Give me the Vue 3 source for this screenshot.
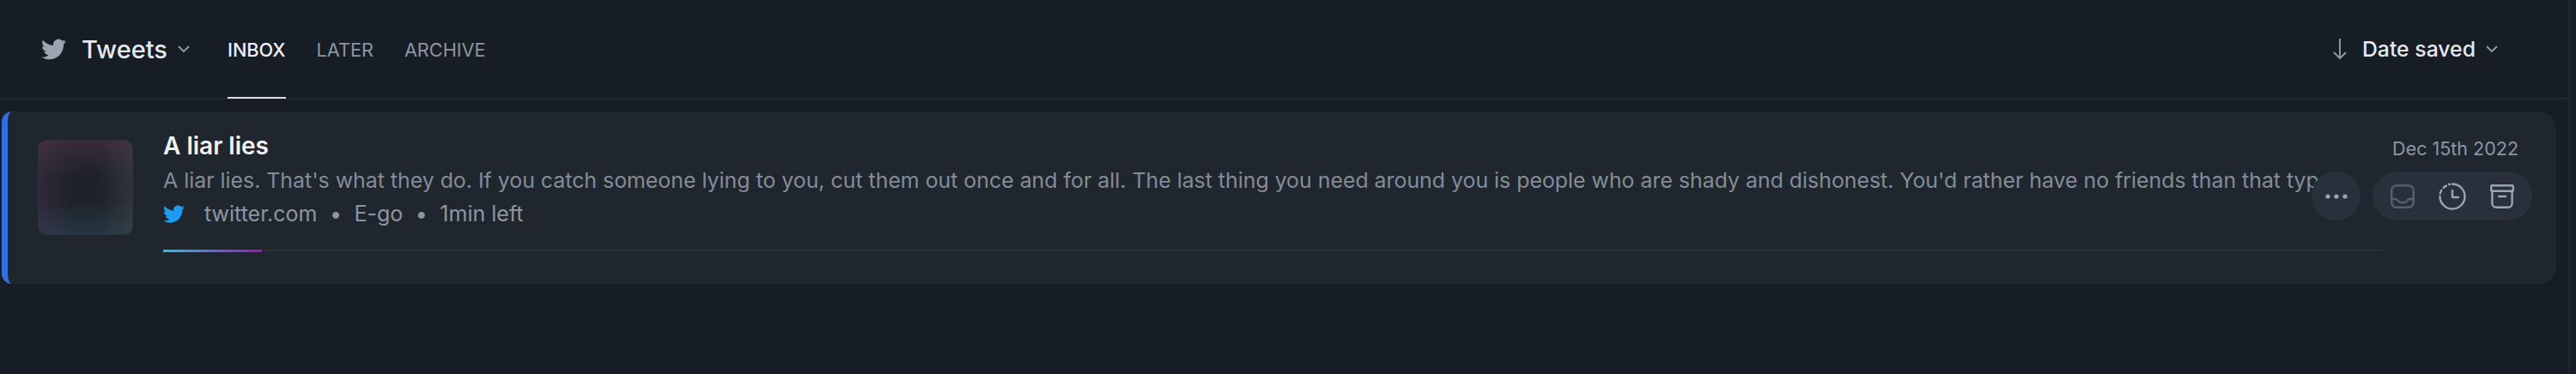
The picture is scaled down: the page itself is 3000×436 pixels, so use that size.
<script setup>
const tabs = [
  { label: 'INBOX', active: true },
  { label: 'LATER', active: false },
  { label: 'ARCHIVE', active: false },
]
const twitterPath = 'M23.953 4.57a10 10 0 01-2.825.775 4.958 4.958 0 002.163-2.723c-.951.555-2.005.959-3.127 1.184a4.92 4.92 0 00-8.384 4.482C7.69 8.095 4.067 6.13 1.64 3.162a4.822 4.822 0 00-.666 2.475c0 1.71.87 3.213 2.188 4.096a4.904 4.904 0 01-2.228-.616v.06a4.923 4.923 0 003.946 4.827 4.996 4.996 0 01-2.212.085 4.936 4.936 0 004.604 3.417 9.867 9.867 0 01-6.102 2.105c-.39 0-.779-.023-1.17-.067a13.995 13.995 0 007.557 2.209c9.053 0 13.998-7.496 13.998-13.985 0-.21 0-.42-.015-.63A9.935 9.935 0 0024 4.59z'
</script>

<template>
  <div class="page">
    <div class="main">
      <header class="topbar">
        <div class="left">
          <svg class="bird" viewBox="0 0 24 24"><path :d="twitterPath" /></svg>
          <span class="feed-name">Tweets</span>
          <svg class="chevron" viewBox="0 0 14 8"><path d="M1 1l6 6 6-6" /></svg>
          <nav class="tabs">
            <a v-for="tab in tabs" :key="tab.label" class="tab" :class="{ active: tab.active }">{{ tab.label }}</a>
          </nav>
        </div>
        <div class="sort">
          <svg class="arrow" viewBox="0 0 16 26"><path d="M8 1v23M1 17l7 7 7-7" /></svg>
          <span class="sort-label">Date saved</span>
          <svg class="chevron" viewBox="0 0 14 8"><path d="M1 1l6 6 6-6" /></svg>
        </div>
      </header>

      <article class="card">
        <div class="thumb"></div>
        <div class="body">
          <h2 class="title">A liar lies</h2>
          <p class="summary">A liar lies. That's what they do. If you catch someone lying to you, cut them out once and for all. The last thing you need around you is people who are shady and dishonest. You'd rather have no friends than that type of people around you.</p>
          <div class="meta">
            <svg class="meta-bird" viewBox="0 0 24 24"><path :d="twitterPath" /></svg>
            <span class="domain">twitter.com</span>
            <span class="dot">•</span>
            <span>E-go</span>
            <span class="dot">•</span>
            <span>1min left</span>
          </div>
          <div class="progress"><div class="progress-fill"></div></div>
        </div>
        <div class="date">Dec 15th 2022</div>
        <div class="actions">
          <button class="more">
            <svg viewBox="0 0 26 6"><circle cx="3" cy="3" r="2.6" /><circle cx="13" cy="3" r="2.6" /><circle cx="23" cy="3" r="2.6" /></svg>
          </button>
          <div class="pill">
            <svg class="icon dim" viewBox="0 0 28 28">
              <rect x="1.2" y="1.2" width="25.6" height="25.6" rx="6" />
              <path d="M1.2 17h5c1.5 0 2 1 2.6 2.2.6 1.2 1.4 1.8 2.7 1.8h5c1.3 0 2.1-.6 2.7-1.8.6-1.2 1.1-2.2 2.6-2.2h5" />
            </svg>
            <svg class="icon clock" viewBox="0 0 32 32">
              <path d="M16 1.5a14.5 14.5 0 1 1-14.5 14.5" />
              <path d="M1.8 12.5a14.5 14.5 0 0 1 1.6-3.7M5.8 5.8a14.5 14.5 0 0 1 3-2.2M12 2l1-.2" />
              <path d="M16 9v8h7" />
            </svg>
            <svg class="icon archive" viewBox="0 0 28 28">
              <rect x="1.2" y="1.2" width="25.6" height="6.5" rx="1" />
              <path d="M2.4 7.7V22a4.8 4.8 0 0 0 4.8 4.8h13.6a4.8 4.8 0 0 0 4.8-4.8V7.7M10 14h8" />
            </svg>
          </div>
        </div>
      </article>
    </div>
  </div>
</template>

<style>
html,
body {
  margin: 0;
  background: #161d25;
}
</style>

<style scoped>
.page {
  display: flex;
  width: 3000px;
  height: 436px;
  overflow: hidden;
  background: #161d25;
  font-family: Inter, "Liberation Sans", sans-serif;
  color: #8c96a3;
}

.main {
  width: 2993px;
  border-right: 2px solid #1f262e;
  box-sizing: border-box;
}

.topbar {
  display: flex;
  align-items: center;
  justify-content: space-between;
  height: 116px;
  box-sizing: border-box;
  padding: 0 82px 0 48px;
  border-bottom: 2px solid #222931;
}

.left,
.sort {
  display: flex;
  align-items: center;
}

.bird {
  width: 29px;
  height: 29px;
  fill: #9aa5b0;
}

.feed-name {
  margin-left: 18px;
  font-size: 29px;
  font-weight: 500;
  color: #e6e8ee;
}

.chevron {
  width: 14px;
  height: 8px;
  margin-left: 12px;
  fill: none;
  stroke: #8c96a3;
  stroke-width: 2;
}

.tabs {
  display: flex;
  gap: 36px;
  margin-left: 44px;
}

.tab {
  position: relative;
  padding-top: 2px;
  font-size: 21.7px;
  line-height: 114px;
  color: #8c96a3;
}

.tab.active {
  color: #f0f1f5;
  font-weight: 500;
}

.tab.active::after {
  content: "";
  position: absolute;
  left: 0;
  right: 0;
  bottom: 0;
  height: 2px;
  background: #d8dbe2;
}

.arrow {
  width: 16px;
  height: 26px;
  fill: none;
  stroke: #8c96a3;
  stroke-width: 2;
}

.sort-label {
  margin-left: 18px;
  font-size: 24.8px;
  font-weight: 500;
  color: #e6e8ee;
}

.card {
  position: relative;
  display: flex;
  width: 2975px;
  height: 201px;
  margin: 14px 0 0 2px;
  box-sizing: border-box;
  padding: 33px 0 0 35px;
  background: #1f262e;
  border-left: 7px solid #2f6fde;
  border-radius: 12px 20px 20px 12px;
}

.thumb {
  flex: none;
  width: 111px;
  height: 111px;
  box-sizing: border-box;
  border: 1px solid #2c333d;
  border-radius: 10px;
  background:
    linear-gradient(to bottom, rgba(92, 56, 76, 0.42), rgba(92, 56, 76, 0) 40%),
    linear-gradient(to right, rgba(78, 50, 90, 0.38), rgba(78, 50, 90, 0) 35%),
    linear-gradient(to left, rgba(70, 76, 84, 0.42), rgba(70, 76, 84, 0) 35%),
    linear-gradient(to top, rgba(44, 76, 92, 0.5), rgba(44, 76, 92, 0) 35%),
    #1e2229;
}

.body {
  width: 2585px;
  margin-left: 35px;
}

.title {
  margin: -10px 0 0;
  font-size: 28px;
  line-height: 34px;
  font-weight: 600;
  color: #f0f1f5;
}

.summary {
  margin: 6px 0 0;
  font-size: 24.86px;
  line-height: 34px;
  white-space: nowrap;
  overflow: hidden;
  width: 2530px;
  color: #838d99;
}

.meta {
  display: flex;
  align-items: center;
  margin-top: 5px;
  font-size: 25px;
  line-height: 34px;
  color: #8c96a3;
}

.meta-bird {
  width: 25px;
  height: 25px;
  fill: #1d9bf0;
}

.domain {
  margin-left: 23px;
}

.dot {
  margin: 0 14.5px;
}

.progress {
  height: 2px;
  margin-top: 25px;
  background: #2a303c;
}

.progress-fill {
  width: 115px;
  height: 3px;
  background: linear-gradient(to right, #2bc0e4, #a40fc4);
}

.date {
  position: absolute;
  top: 30px;
  right: 44px;
  font-size: 21.5px;
  line-height: 26px;
  color: #8c96a3;
}

.actions {
  position: absolute;
  top: 70px;
  right: 28px;
  display: flex;
  gap: 14px;
}

.more {
  width: 57px;
  height: 57px;
  padding: 0;
  border: none;
  border-radius: 50%;
  background: #29303b;
  display: flex;
  align-items: center;
  justify-content: center;
}

.more svg {
  width: 26px;
  height: 6px;
  fill: #9aa5b0;
}

.pill {
  display: flex;
  align-items: center;
  justify-content: space-between;
  width: 186px;
  height: 57px;
  box-sizing: border-box;
  padding: 0 21px;
  border-radius: 29px;
  background: #29303b;
}

.icon {
  flex: none;
  fill: none;
  stroke: #9aa5b0;
  stroke-width: 2.4;
  stroke-linecap: round;
  stroke-linejoin: round;
}

.icon.clock {
  width: 32px;
  height: 32px;
}

.icon.archive {
  width: 28px;
  height: 28px;
}

.icon.dim {
  width: 28px;
  height: 28px;
  stroke: #56606b;
}
</style>
